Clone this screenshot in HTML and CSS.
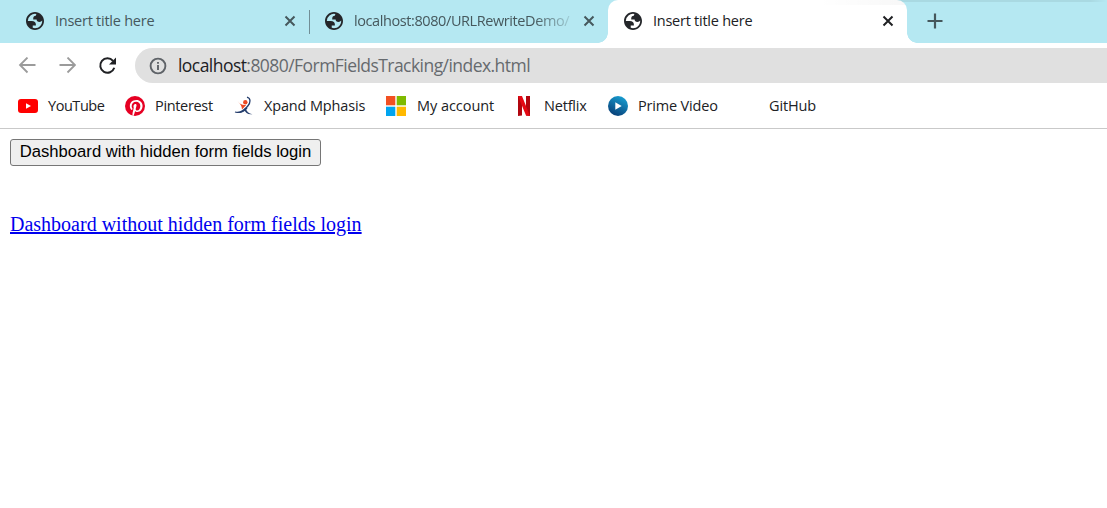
FILE: index.html
```html
<!DOCTYPE html>
<html lang="en">
<head>
<meta charset="utf-8">
<title>Insert title here</title>
<link rel="stylesheet" href="styles.css">
</head>
<body>
<svg class="defs" aria-hidden="true">
  <symbol id="globe" viewBox="2 2 20 20"><path fill="#24262a" fill-rule="evenodd" d="M12 2C6.480 2 2 6.480 2 12s4.480 10 10 10 10-4.480 10-10S17.520 2 12 2zM4 12h4.400c3.407.022 4.922 1.730 4.543 5.127H9.488v2.470a8.004 8.004 0 0 0 10.498-8.083C19.327 12.504 18.332 13 17 13c-2.137 0-3.206-.916-3.206-2.750h-3.748c-.274-2.728.683-4.092 2.870-4.092 0-.975.327-1.597.811-1.970A8.004 8.004 0 0 0 4 12z"/></symbol>
  <symbol id="close" viewBox="0 0 12 12"><path d="M1.500 1.500l9 9M10.500 1.500l-9 9" fill="none" stroke="currentColor" stroke-width="2"/></symbol>
</svg>
<header class="browser">
  <div class="tabs">
    <div class="tab first"><svg class="favicon"><use href="#globe"/></svg><span class="title">Insert title here</span><svg class="close"><use href="#close"/></svg></div>
    <div class="tab second"><svg class="favicon"><use href="#globe"/></svg><span class="title long">localhost:8080/URLRewriteDemo/</span><svg class="close"><use href="#close"/></svg></div>
    <div class="tab active"><svg class="favicon"><use href="#globe"/></svg><span class="title">Insert title here</span><svg class="close"><use href="#close"/></svg></div>
    <svg class="plus" viewBox="0 0 16 16"><path d="M8 .500v15M.500 8h15" stroke="#45575c" stroke-width="2.200"/></svg>
  </div>
  <div class="toolbar">
    <svg class="nav" viewBox="0 0 18 18"><path d="M17.500 8H2.500M9.500 .500L2 8l7.500 7.500" fill="none" stroke="#9b9b9b" stroke-width="1.800"/></svg>
    <svg class="nav" viewBox="0 0 18 18"><path d="M1.500 8h15M9.500 .500L17 8l-7.500 7.500" fill="none" stroke="#9b9b9b" stroke-width="1.800"/></svg>
    <svg class="nav" viewBox="0 0 18 18"><path d="M16.300 10.800A7.200 7.200 0 1 1 15 3.900" fill="none" stroke="#202124" stroke-width="2"/><path d="M18 .500v7h-7z" fill="#202124"/></svg>
    <div class="address">
      <svg class="info" viewBox="0 0 18 18"><circle cx="9" cy="9" r="7.400" fill="none" stroke="#5f6368" stroke-width="1.900"/><path d="M9 8v5M9 5v1.800" stroke="#5f6368" stroke-width="1.900"/></svg>
      <span class="url"><b>localhost</b>:8080/FormFieldsTracking/index.html</span>
    </div>
  </div>
  <nav class="bookmarks">
    <a class="mark w-youtube"><svg viewBox="0 0 20 20"><rect y="3" width="20" height="14" rx="3" fill="#f00"/><path d="M8 7.200l5 2.800-5 2.800z" fill="#fff"/></svg><span>YouTube</span></a>
    <a class="mark w-pinterest"><svg viewBox="0 0 24 24"><circle cx="12" cy="12" r="12" fill="#e60023"/><path fill="#fff" d="M9.100 23.600c-.100-.940-.180-2.390.040-3.420l1.400-5.960s-.350-.710-.350-1.770c0-1.660.960-2.900 2.160-2.900 1.020 0 1.510.770 1.510 1.680 0 1.030-.650 2.560-.990 3.980-.280 1.190.600 2.160 1.770 2.160 2.120 0 3.760-2.240 3.760-5.480 0-2.860-2.060-4.870-5-4.870-3.400 0-5.400 2.550-5.400 5.190 0 1.030.390 2.130.890 2.730.100.120.110.220.080.340l-.330 1.360c-.050.220-.170.270-.400.160-1.490-.690-2.430-2.880-2.430-4.630 0-3.770 2.740-7.230 7.900-7.230 4.150 0 7.370 2.960 7.370 6.900 0 4.120-2.600 7.430-6.200 7.430-1.210 0-2.350-.630-2.740-1.370l-.750 2.850c-.270 1.040-1 2.340-1.490 3.140z"/></svg><span>Pinterest</span></a>
    <a class="mark w-xpand"><svg viewBox="0 0 20 20"><circle cx="11.300" cy="6.200" r="2.200" fill="#ee4a22"/><path d="M3.500 5c2.200 3.200 4.800 4.400 8.700 4L8 13.500C7.900 10 6.200 7.800 3.500 5z" fill="#ee4a22"/><path d="M13 1.200c4 1.200 3.700 5.200.8 8.800C10.500 14.300 6 17.500 1 16" fill="none" stroke="#253e6d" stroke-width="1.300"/><path d="M12.500 11c-2.500 3.500-6.500 6-11 5.200 4.200 2.300 9-.2 12-4z" fill="#253e6d"/><path d="M11.500 11.500c1 4.200 3.200 6.400 7 6.700-4.200.8-7.200-1.200-8.600-4.900z" fill="#253e6d"/></svg><span>Xpand Mphasis</span></a>
    <a class="mark w-account"><svg viewBox="0 0 20 20"><path fill="#f25022" d="M0 0h9.300v9.300H0z"/><path fill="#7fba00" d="M10.700 0H20v9.300h-9.300z"/><path fill="#00a4ef" d="M0 10.700h9.300V20H0z"/><path fill="#ffb900" d="M10.700 10.700H20V20h-9.300z"/></svg><span>My account</span></a>
    <a class="mark w-netflix"><svg viewBox="0 0 20 20"><path d="M4 0h4v19.500L4 20zM12 0h4v20l-4-.5z" fill="#b1060f"/><path d="M4 0h4l8 20-4-.5z" fill="#e50914"/></svg><span>Netflix</span></a>
    <a class="mark w-prime"><svg viewBox="0 0 20 20"><defs><linearGradient id="blue" x1=".75" y1="0" x2=".25" y2="1"><stop stop-color="#18a0d3"/><stop offset="1" stop-color="#073b74"/></linearGradient></defs><circle cx="10" cy="10" r="10" fill="url(#blue)"/><path d="M7.300 6.300L13.700 10l-6.400 3.700z" fill="#fff"/></svg><span>Prime Video</span></a>
    <a class="mark w-github"><svg viewBox="0 0 20 20"></svg><span>GitHub</span></a>
  </nav>
</header>
<main class="page">
  <button class="dashboard" type="button">Dashboard with hidden form fields login</button>
  <a class="link" href="#">Dashboard without hidden form fields login</a>
</main>
</body>
</html>
```

FILE: styles.css
```css
* { box-sizing: border-box; }
body { margin: 0; width: 1107px; height: 508px; overflow: hidden; background: #fff; }
svg { display: block; flex: none; }
.defs { position: absolute; width: 0; height: 0; }
.browser { font-family: "Open Sans", "Noto Sans", sans-serif; color: #202124; }
.tabs { display: flex; height: 43px; background: linear-gradient(90deg, transparent 810px, #0001 850px, #0001 1090px, transparent) 0 0 / 100% 2px no-repeat, #b5e8f2; align-items: center; }
.tab { display: flex; align-items: center; height: 43px; color: #46585d; font-size: 14.5px; }
.first { width: 310px; padding-left: 26px; position: relative; }
.first::after { content: ""; position: absolute; right: 0; top: 10px; width: 1px; height: 24px; background: #718e96; }
.second { width: 298px; padding-left: 15px; }
.active { position: relative; width: 299px; padding-left: 16px; background: linear-gradient(90deg, transparent 210px, #00000008) 0 0 / 100% 5px no-repeat, #fff; border-radius: 10px 10px 0 0; color: #202124; }
.active::before, .active::after { content: ""; position: absolute; bottom: 0; width: 10px; height: 10px; }
.active::before { left: -10px; background: radial-gradient(circle at 0 0, transparent 9.5px, #fff 10px); }
.active::after { right: -10px; background: radial-gradient(circle at 100% 0, transparent 9.5px, #fff 10px); }
.favicon { width: 18px; height: 18px; margin-bottom: 1px; }
.title { width: 218px; margin: 0 0 2px 11px; white-space: nowrap; letter-spacing: -.25px; }
.long { letter-spacing: -.41px; mask-image: linear-gradient(90deg, #000 180px, transparent 224px); }
.close { width: 12px; height: 12px; margin: 0 0 1px 10.5px; }
.plus { width: 16px; height: 16px; margin: 0 0 1px 20px; }
.toolbar { display: flex; align-items: center; height: 45px; padding: 0 0 0 18px; gap: 22px; }
.nav { width: 18px; height: 18px; }
.address { flex: 1; display: flex; align-items: center; height: 35px; margin-left: -3px; padding-left: 14px; gap: 11px; background: #e0e0e0; border-radius: 18px 0 0 18px; }
.info { width: 18px; height: 18px; }
.url { color: #666a6e; font-size: 17.5px; letter-spacing: -.55px; white-space: nowrap; margin-bottom: 1px; }
.url b { font-weight: 400; color: #202124; }
.bookmarks { display: flex; height: 41px; padding: 0 0 4px 18px; gap: 20px; align-items: center; border-bottom: 1px solid #c9c9c9; font-size: 14.5px; }
.mark { display: flex; align-items: center; gap: 10px; white-space: nowrap; }
.mark svg { width: 20px; height: 20px; }
.mark span { margin-bottom: 2px; }
.w-youtube { width: 87px; letter-spacing: -.45px; }
.w-pinterest { width: 89px; letter-spacing: -.33px; }
.w-xpand { width: 132px; letter-spacing: -.15px; }
.w-account { width: 108px; gap: 11px; letter-spacing: -.05px; }
.w-netflix { width: 74px; letter-spacing: -.2px; }
.w-prime { width: 111px; letter-spacing: -.18px; }
.w-github { width: 77px; letter-spacing: -.15px; }
.page { display: flex; flex-direction: column; align-items: flex-start; padding: 10px; gap: 47px; }
.dashboard { width: 311px; height: 27px; padding: 0 0 1px; border: 1px solid #767676; border-radius: 3px; background: #efefef; color: #000; font: 16.67px "Liberation Sans", Arial, sans-serif; white-space: nowrap; }
.link { font: 20px/23px "Liberation Serif", "Times New Roman", serif; color: #00e; text-decoration: underline; white-space: nowrap; }
```
